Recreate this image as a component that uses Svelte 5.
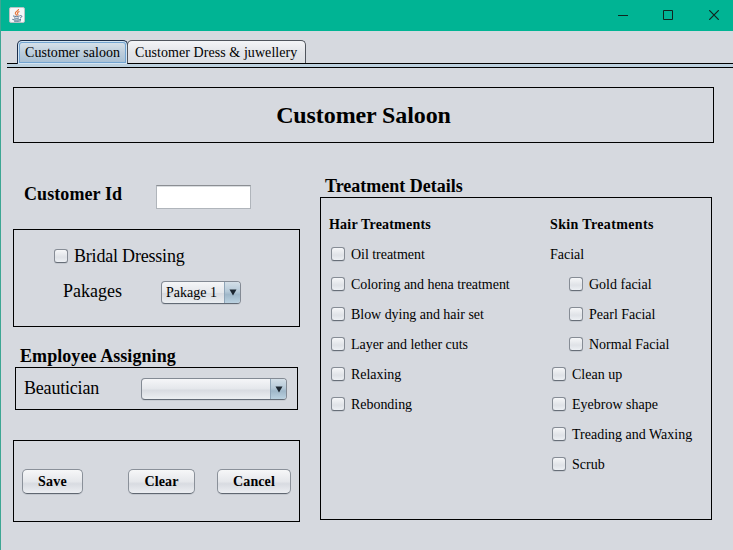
<script>
  const hair = [
    'Oil treatment',
    'Coloring and hena treatment',
    'Blow dying and hair set',
    'Layer and lether cuts',
    'Relaxing',
    'Rebonding',
  ];
  const facials = ['Gold facial', 'Pearl Facial', 'Normal Facial'];
  const skin = ['Clean up', 'Eyebrow shape', 'Treading and Waxing', 'Scrub'];
</script>

{#snippet check(label)}
  <label class="check"><input type="checkbox" /><span>{label}</span></label>
{/snippet}

{#snippet combo(value, kind)}
  <div class="combo {kind}">
    <span class="value">{value}</span>
    <span class="arrow">
      <svg width="8" height="7" viewBox="0 0 8 7"><path d="M0.5 0.5h7L4 6.5z" fill="#1c2630" /></svg>
    </span>
  </div>
{/snippet}

<div class="window">
  <header class="titlebar">
    <svg class="java" width="16" height="16" viewBox="0 0 16 16">
      <rect x="0.5" y="0.5" width="15" height="15" rx="1.5" fill="#f4f6f8" stroke="#b9c3c6" />
      <path d="M9.6 2C9.8 4 6.1 4.4 6.3 6.2C6.4 7 7.6 7.7 7.7 8.6M10.5 4.6C8.7 5.2 7.9 6 8.8 7.1C9.2 7.6 9 8 8.7 8.5" fill="none" stroke="#e5763a" stroke-width="1.1" />
      <path d="M4 8.9C5.8 9.7 9.5 9.5 10.8 8.9M5 10.9C6.8 11.5 8.8 11.4 10 10.9M11.2 8.6C13.6 8.2 13.2 10.5 11 11M3.3 12.3C5 13.3 10 13.3 12 12.3M5 14.1C8 14.5 10.5 14.2 12 13.7" fill="none" stroke="#4d6d89" stroke-width="0.95" />
    </svg>
    <div class="controls">
      <svg width="10" height="10" viewBox="0 0 10 10"><path d="M0 5.5h10" /></svg>
      <svg width="10" height="10" viewBox="0 0 10 10"><path d="M0.5 0.5h9v9h-9z" /></svg>
      <svg width="10" height="10" viewBox="0 0 10 10"><path d="M0.2 0.2l9.6 9.6M9.8 0.2l-9.6 9.6" stroke-width="1.2" /></svg>
    </div>
  </header>

  <nav class="tabs">
    <div class="tab selected">Customer saloon</div>
    <div class="tab second">Customer Dress &amp; juwellery</div>
  </nav>
  <div class="tabline"></div>

  <main>
    <h1 class="panel">Customer Saloon</h1>
    <div class="columns">
      <section class="left">
        <div class="customer">
          <h2>Customer Id</h2>
          <input class="field" type="text" aria-label="Customer Id" />
        </div>
        <div class="panel bridal">
          {@render check('Bridal Dressing')}
          <div class="package">
            <span>Pakages</span>
            {@render combo('Pakage 1', 'small')}
          </div>
        </div>
        <h2 class="employee">Employee Assigning</h2>
        <div class="panel beautician">
          <span>Beautician</span>
          {@render combo('', 'wide')}
        </div>
        <div class="panel actions">
          <button class="save">Save</button>
          <button class="clear">Clear</button>
          <button class="cancel">Cancel</button>
        </div>
      </section>

      <section class="right">
        <h2>Treatment Details</h2>
        <div class="panel details">
          <div class="hair">
            <h3>Hair Treatments</h3>
            <div class="list">
              {#each hair as item}{@render check(item)}{/each}
            </div>
          </div>
          <div class="skin">
            <h3>Skin Treatments</h3>
            <p>Facial</p>
            <div class="list nested">
              {#each facials as item}{@render check(item)}{/each}
            </div>
            <div class="list">
              {#each skin as item}{@render check(item)}{/each}
            </div>
          </div>
        </div>
      </section>
    </div>
  </main>
</div>

<style>
  :global(body) { margin: 0; background: #d6d9df; }
  .window, .window * { box-sizing: border-box; }
  .window {
    width: 733px; height: 550px; overflow: hidden;
    border-left: 1px solid #3da693;
    background: #d6d9df; color: #000;
    font: 14px/18px "Liberation Serif", "Times New Roman", serif;
    white-space: nowrap;
  }
  h1, h2, h3, p { margin: 0; }
  .titlebar {
    display: flex; justify-content: space-between; align-items: flex-start;
    height: 31px; margin-left: -1px; padding: 7px 14px 0 9px; background: #00b494;
  }
  .java { display: block; }
  .controls { display: flex; gap: 35px; padding: 3px 0 0; }
  .controls svg { display: block; fill: none; stroke: #10251f; stroke-width: 1; }
  .controls svg:last-child { margin-left: 1px; }

  .tabs { display: flex; height: 32px; padding: 9px 0 0 16px; }
  .tab {
    height: 23px; padding: 3px 0 0 7px; border: 1px solid #50555d; border-bottom: 0;
    border-radius: 5px 5px 0 0; background: linear-gradient(#f4f5f7, #e3e5e9 50%, #dcdfe4);
  }
  .selected {
    width: 111px; height: 24px; border-color: #1b2d49; letter-spacing: 0.04px;
    background: linear-gradient(#dbe4ec, #bccddc 50%, #a6bfd4);
    box-shadow: inset 0 0 0 1px #d3e4f2, inset 0 0 0 2px #73a4d1;
  }
  .second { width: 179px; margin-left: -1px; letter-spacing: 0.07px; }
  .tabline {
    height: 5px; margin-left: 6px;
    background: linear-gradient(#000, #000) 0 0 / 10px 1px no-repeat,
      linear-gradient(#000, #000) 120px 0 / 700px 1px no-repeat, #bcd0de;
    border-bottom: 1px solid #000; 
  }

  main { padding: 19px 19px 0 12px; }
  .panel { border: 1px solid #000; }
  h1 { width: 701px; height: 56px; font-size: 24px; line-height: 55px; text-align: center; letter-spacing: -0.1px; }
  h2 { font-size: 18px; line-height: 20px; }
  h3 { font-size: 14px; line-height: 32px; height: 30px; letter-spacing: 0.2px; }
  .skin h3 { letter-spacing: 0.36px; }
  .columns { display: flex; justify-content: space-between; padding-right: 2px; }
  .left { width: 287px; }
  .right { width: 392px; padding-top: 33px; }
  .right h2 { height: 21px; padding-left: 5px; }

  .customer { display: flex; height: 86px; padding: 41px 0 0 11px; }
  .customer h2 { width: 132px; letter-spacing: 0.08px; }
  .field {
    width: 95px; height: 24px; margin-top: 1px; padding: 2px 6px; font: inherit;
    border: 1px solid #b0b5bb; border-top-color: #8b8e93; border-radius: 0;
    background: #fff; box-shadow: inset 0 1px #dadde0;
  }
  .bridal { height: 98px; padding: 15px 0 0 38px; font-size: 18px; }
  .check { display: flex; align-items: center; height: 30px; }
  .check span { padding-top: 2px; }
  .check input {
    appearance: none; width: 14px; height: 14px; margin: 0 6px 0 2px;
    border: 1px solid #868c95; border-bottom-color: #676e78; border-radius: 3px;
    background: linear-gradient(#f6f7f9, #dfe2e7 60%, #edf0f4);
    box-shadow: 0 1px #c4c8cf;
  }
  .bridal .check { height: 22px; letter-spacing: -0.2px; }
  .bridal .check span { padding-top: 0; }
  .package { display: flex; align-items: flex-start; padding: 14px 0 0 11px; }
  .package > span { width: 98px; line-height: 20px; }
  .combo {
    display: flex; justify-content: space-between; overflow: hidden;
    border: 1px solid #838a94; border-bottom-color: #626a75; border-radius: 4px;
    background: linear-gradient(#f5f6f8, #e4e7eb 50%, #d8dbe1 55%, #eceff2);
    font-size: 14px; box-shadow: 0 1px #c7cbd1;
  }
  .small { width: 80px; height: 23px; }
  .wide { width: 146px; height: 22px; }
  .value { padding-left: 4px; line-height: 22px; }
  .arrow {
    display: flex; align-items: center; justify-content: center; width: 16px;
    border-left: 1px solid #8fa5b8; background: linear-gradient(#d4dfe8, #b5c9d8 45%, #9fb7c9 60%, #bbd2e1);
  }
  .arrow svg { display: block; }
  .employee { height: 40px; padding: 19px 0 0 7px; letter-spacing: 0.07px; }
  .beautician {
    display: flex; width: 283px; height: 43px; margin-left: 2px; padding: 10px 0 0 8px;
    font-size: 18px; line-height: 20px;
  }
  .beautician > span { width: 117px; letter-spacing: -0.2px; }
  .actions { display: flex; height: 82px; margin-top: 30px; padding: 28px 0 0 8px; }
  button {
    height: 25px; padding: 1px 0 0; font: bold 14px/20px "Liberation Serif", "Times New Roman", serif; color: #000;
    border: 1px solid #8a9099; border-bottom-color: #606771; border-radius: 5px;
    background: linear-gradient(#f6f7f8, #e5e7eb 50%, #d8dbe1 60%, #eceef2);
    box-shadow: 0 1px #c4c8cf;
  }
  .save { width: 61px; letter-spacing: 0.2px; }
  .clear { width: 67px; margin-left: 45px; letter-spacing: 0.1px; }
  .cancel { width: 74px; margin-left: 22px; letter-spacing: 0.1px; }
  .details { display: flex; height: 323px; padding: 11px 0 0 8px; }
  .hair { width: 221px; }
  .hair .check { letter-spacing: -0.04px; }
  .details p { line-height: 32px; height: 30px; }
  .nested { padding-left: 17px; }
</style>
